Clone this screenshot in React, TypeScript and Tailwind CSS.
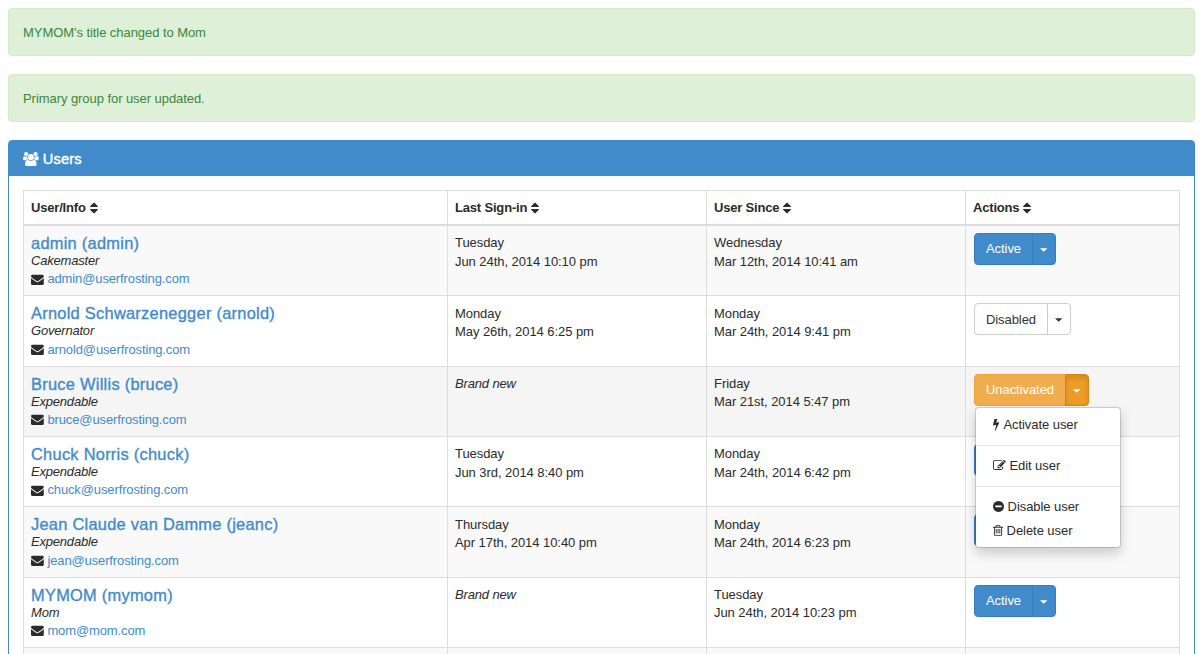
import type { ReactNode } from 'react';

const PATHS = {
  users:
    'M657 896q-162 5-265 128h-134q-82 0-138-40.5t-56-118.5q0-353 124-353 6 0 43.5 21t97.5 42.5 119 21.5q67 0 133-23-5 37-5 66 0 159 90 283zm1071 637q0 120-73 189.5t-194 69.5h-874q-121 0-194-69.5t-73-189.5q0-53 3.5-103.5t14-109 26.5-108.5 43-97.5 62-81 85.5-53.5 111.5-20q10 0 43 21.5t73 48 107 48 135 21.5 135-21.5 107-48 73-48 43-21.5q61 0 111.5 20t85.5 53.5 62 81 43 97.5 26.5 108.5 14 109 3.5 103.5zm-1024-1277q0 106-75 181t-181 75-181-75-75-181 75-181 181-75 181 75 75 181zm704 384q0 159-112.5 271.5t-271.5 112.5-271.5-112.5-112.5-271.5 112.5-271.5 271.5-112.5 271.5 112.5 112.5 271.5zm576 225q0 78-56 118.5t-138 40.5h-134q-103-123-265-128 90-124 90-283 0-29-5-66 66 23 133 23 59 0 119-21.5t97.5-42.5 43.5-21q124 0 124 353zm-128-609q0 106-75 181t-181 75-181-75-75-181 75-181 181-75 181 75 75 181z',
  sort: 'M1408 1088q0 26-19 45l-448 448q-19 19-45 19t-45-19l-448-448q-19-19-19-45t19-45 45-19h896q26 0 45 19t19 45zm0-384q0 26-19 45t-45 19h-896q-26 0-45-19t-19-45 19-45l448-448q19-19 45-19t45 19l448 448q19 19 19 45z',
  envelope:
    'M1792 710v794q0 66-47 113t-113 47h-1472q-66 0-113-47t-47-113v-794q44 49 101 87 362 246 497 345 57 42 92.5 65.5t94.5 48 110 24.5h2q51 0 110-24.5t94.5-48 92.5-65.5q170-123 498-345 57-39 100-87zm0-294q0 79-49 151t-122 123q-376 261-468 325-10 7-42.5 31t-54 38.5-52 32.5-57.5 27-50 9h-2q-23 0-50-9t-57.5-27-52-32.5-54-38.5-42.5-31q-91-64-262-182.5t-205-142.5q-62-42-117-115.5t-55-136.5q0-78 41.5-130t118.5-52h1472q65 0 112.5 47t47.5 113z',
  bolt: 'M1333 566q18 20 7 44l-540 1157q-13 25-42 25-4 0-14-2-17-5-25.5-19t-4.5-30l197-808-406 101q-4 1-12 1-18 0-31-11-18-15-13-39l201-825q4-14 16-23t28-9h328q19 0 32 12.5t13 29.5q0 8-5 18l-171 463 396-98q8-2 12-2 19 0 34 15z',
  edit: 'M888 1184l116-116-152-152-116 116v56h96v96h56zm440-720q-16-16-33 1l-350 350q-17 17-1 33t33-1l350-350q17-17 1-33zm80 594v190q0 119-84.5 203.5t-203.5 84.5h-832q-119 0-203.5-84.5t-84.5-203.5v-832q0-119 84.5-203.5t203.5-84.5h832q63 0 117 25 15 7 18 23 3 17-9 29l-49 49q-14 14-32 8-23-6-45-6h-832q-66 0-113 47t-47 113v832q0 66 47 113t113 47h832q66 0 113-47t47-113v-126q0-13 9-22l64-64q15-15 35-7t20 29zm-96-738l288 288-672 672h-288v-288zm444 132l-92 92-288-288 92-92q28-28 68-28t68 28l152 152q28 28 28 68t-28 68z',
  minus:
    'M1344 960v-128q0-26-19-45t-45-19h-768q-26 0-45 19t-19 45v128q0 26 19 45t45 19h768q26 0 45-19t19-45zm320-64q0 209-103 385.5t-279.5 279.5-385.5 103-385.5-103-279.5-279.5-103-385.5 103-385.5 279.5-279.5 385.5-103 385.5 103 279.5 279.5 103 385.5z',
  trash:
    'M704 736v576q0 14-9 23t-23 9h-64q-14 0-23-9t-9-23v-576q0-14 9-23t23-9h64q14 0 23 9t9 23zm256 0v576q0 14-9 23t-23 9h-64q-14 0-23-9t-9-23v-576q0-14 9-23t23-9h64q14 0 23 9t9 23zm256 0v576q0 14-9 23t-23 9h-64q-14 0-23-9t-9-23v-576q0-14 9-23t23-9h64q14 0 23 9t9 23zm128 724v-948h-896v948q0 22 7 40.5t14.5 27 10.5 8.5h832q3 0 10.5-8.5t14.5-27 7-40.5zm-672-1076h448l-48-117q-7-9-17-11h-317q-10 2-17 11zm928 32v64q0 14-9 23t-23 9h-96v948q0 83-47 143.5t-113 60.5h-832q-66 0-113-58.5t-47-141.5v-952h-96q-14 0-23-9t-9-23v-64q0-14 9-23t23-9h309l70-167q15-37 54-63t79-26h320q40 0 79 26t54 63l70 167h309q14 0 23 9t9 23z',
};

function Icon({ name, box, className }: { name: keyof typeof PATHS; box: string; className: string }) {
  return (
    <svg viewBox={box} className={`shrink-0 fill-current ${className}`} aria-hidden="true">
      <path d={PATHS[name]} />
    </svg>
  );
}

type Status = 'active' | 'disabled' | 'unactivated';

interface User {
  name: string;
  title: string;
  email: string;
  signIn: string[] | null;
  since: string[];
  status: Status;
  tone: string;
  underMenu?: boolean;
}

const USERS: User[] = [
  { name: 'admin (admin)', title: 'Cakemaster', email: 'admin@userfrosting.com', signIn: ['Tuesday', 'Jun 24th, 2014 10:10 pm'], since: ['Wednesday', 'Mar 12th, 2014 10:41 am'], status: 'active', tone: 'bg-[#f9f9f9]' },
  { name: 'Arnold Schwarzenegger (arnold)', title: 'Governator', email: 'arnold@userfrosting.com', signIn: ['Monday', 'May 26th, 2014 6:25 pm'], since: ['Monday', 'Mar 24th, 2014 9:41 pm'], status: 'disabled', tone: 'bg-white' },
  { name: 'Bruce Willis (bruce)', title: 'Expendable', email: 'bruce@userfrosting.com', signIn: null, since: ['Friday', 'Mar 21st, 2014 5:47 pm'], status: 'unactivated', tone: 'bg-[#f5f5f5]' },
  { name: 'Chuck Norris (chuck)', title: 'Expendable', email: 'chuck@userfrosting.com', signIn: ['Tuesday', 'Jun 3rd, 2014 8:40 pm'], since: ['Monday', 'Mar 24th, 2014 6:42 pm'], status: 'active', tone: 'bg-white', underMenu: true },
  { name: 'Jean Claude van Damme (jeanc)', title: 'Expendable', email: 'jean@userfrosting.com', signIn: ['Thursday', 'Apr 17th, 2014 10:40 pm'], since: ['Monday', 'Mar 24th, 2014 6:23 pm'], status: 'active', tone: 'bg-[#f9f9f9]', underMenu: true },
  { name: 'MYMOM (mymom)', title: 'Mom', email: 'mom@mom.com', signIn: null, since: ['Tuesday', 'Jun 24th, 2014 10:23 pm'], status: 'active', tone: 'bg-white' },
];

const COLS = 'grid grid-cols-[423px_259px_259px_minmax(0,1fr)]';

function Alert({ children }: { children: ReactNode }) {
  return (
    <div className="mb-[18px] flex h-12 items-center rounded-[4px] border border-[#d6e9c6] bg-[#dff0d8] px-[14px] pt-[2px] text-[#3c863d]">
      {children}
    </div>
  );
}

function Caret() {
  return (
    <svg viewBox="0 0 8 4" className="h-[4px] w-[7.4px] fill-current" aria-hidden="true">
      <path d="M0 0h8L4 4z" />
    </svg>
  );
}

const BUTTONS: Record<Status, { label: string; main: string; toggle: string }> = {
  active: {
    label: 'Active',
    main: 'w-[59px] border-[#357ebd] bg-[#428bca] text-white',
    toggle: 'w-[24px] border-[#357ebd] bg-[#428bca] text-white',
  },
  disabled: {
    label: 'Disabled',
    main: 'w-[74px] border-[#ccc] bg-white text-[#333]',
    toggle: 'w-[24px] border-[#ccc] bg-white text-[#333]',
  },
  unactivated: {
    label: 'Unactivated',
    main: 'w-[92px] border-[#eea236] bg-[#f0ad4e] text-white',
    toggle: 'w-[24px] border-[#d58512] bg-[#ed9c28] text-white shadow-[inset_0_3px_5px_rgba(0,0,0,0.125)]',
  },
};

function SplitButton({ status, blank }: { status: Status; blank?: boolean }) {
  const b = BUTTONS[status];
  return (
    <div className="relative flex h-[32px]">
      <button className={`flex items-center justify-center rounded-l-[4px] border pt-px ${b.main}`}>{blank ? null : b.label}</button>
      <button className={`-ml-px flex items-center justify-center rounded-r-[4px] border pt-[2px] ${b.toggle}`}>
        <Caret />
      </button>
      {status === 'unactivated' && <Menu />}
    </div>
  );
}

function MenuItem({ children }: { children: ReactNode }) {
  return <li className="flex h-6 items-center pl-[17px]">{children}</li>;
}

function Menu() {
  return (
    <ul className="absolute top-[33.5px] left-px z-10 w-[146px] rounded-[4px] border border-black/15 bg-white bg-clip-padding py-[4.5px] shadow-[0_6px_12px_rgba(0,0,0,0.175)]">
      <MenuItem>
        <Icon name="bolt" box="448 0 896 1792" className="mr-[4px] h-[12.8px] w-[6.4px]" />
        Activate user
      </MenuItem>
      <li className="my-2 h-px bg-[#e5e5e5]" />
      <MenuItem>
        <Icon name="edit" box="0 0 1792 1792" className="mr-[3.6px] h-[12.8px] w-[12.8px]" />
        Edit user
      </MenuItem>
      <li className="my-2 h-px bg-[#e5e5e5]" />
      <MenuItem>
        <Icon name="minus" box="128 0 1536 1792" className="mr-[3.6px] h-[12.8px] w-[11px]" />
        Disable user
      </MenuItem>
      <MenuItem>
        <Icon name="trash" box="192 0 1408 1792" className="mr-[3.6px] h-[12.8px] w-[10px]" />
        Delete user
      </MenuItem>
    </ul>
  );
}

function Row({ user }: { user: User }) {
  return (
    <div className={`${COLS} h-[70.36px] border-b border-[#ddd] leading-[18.3px] ${user.tone}`}>
      <div className="px-[7px] pt-[8px]">
        <div className="text-[16.4px] tracking-[0.27px] whitespace-nowrap text-[#428bca] [-webkit-text-stroke:0.35px_#428bca]">
          {user.name}
        </div>
        <div className="-mt-[0.3px] tracking-[-0.2px] italic">{user.title}</div>
        <div className="flex items-center">
          <Icon name="envelope" box="0 0 1792 1792" className="mr-[3.6px] mb-px h-[12.8px] w-[12.8px]" />
          <a className="tracking-[-0.12px] text-[#428bca]">{user.email}</a>
        </div>
      </div>
      <div className="border-l border-[#ddd] px-[7px] pt-[8.4px]">
        {user.signIn ? user.signIn.map((line) => <div key={line}>{line}</div>) : <em className="tracking-[-0.15px]">Brand new</em>}
      </div>
      <div className="border-l border-[#ddd] px-[7px] pt-[8.4px]">
        {user.since.map((line) => (
          <div key={line}>{line}</div>
        ))}
      </div>
      <div className="border-l border-[#ddd] px-[8px] pt-[7px]">
        <SplitButton status={user.status} blank={user.underMenu} />
      </div>
    </div>
  );
}

export default function App() {
  return (
    <main className="h-[654px] overflow-hidden bg-white pt-2 pr-[5px] pl-2 font-['Liberation_Sans',Arial,sans-serif] text-[13px] tracking-[-0.06px] text-[#2b2b2b]">
      <Alert>MYMOM's title changed to Mom</Alert>
      <Alert>Primary group for user updated.</Alert>
      <section className="h-[600px] rounded-[4px] border border-[#428bca]">
        <h3 className="flex h-[35px] items-center bg-[#428bca] px-[14px] pt-[2px] text-[14.6px] tracking-[0.2px] text-white [-webkit-text-stroke:0.4px_white]">
          <Icon name="users" box="64 0 1920 1792" className="mr-[4px] mb-px h-[14.6px] w-[15.7px] [-webkit-text-stroke:0]" />
          Users
        </h3>
        <div className="px-[14px] pt-[14px]">
          <div className="border border-[#ddd]">
            <div className={`${COLS} h-[35px] border-b-2 border-[#ddd] font-bold tracking-[-0.18px]`}>
              {['User/Info', 'Last Sign-in', 'User Since', 'Actions'].map((label, i) => (
                <div key={label} className={`flex items-center px-[7px] pt-px ${i ? 'border-l border-[#ddd]' : ''}`}>
                  {label}
                  <Icon name="sort" box="384 0 1024 1792" className="ml-[3.8px] h-[14px] w-[8px]" />
                </div>
              ))}
            </div>
            {USERS.map((user) => (
              <Row key={user.email} user={user} />
            ))}
            <div className={`${COLS} h-[70px] bg-[#f9f9f9]`}>
              <div />
              <div className="border-l border-[#ddd]" />
              <div className="border-l border-[#ddd]" />
              <div className="border-l border-[#ddd]" />
            </div>
          </div>
        </div>
      </section>
    </main>
  );
}
